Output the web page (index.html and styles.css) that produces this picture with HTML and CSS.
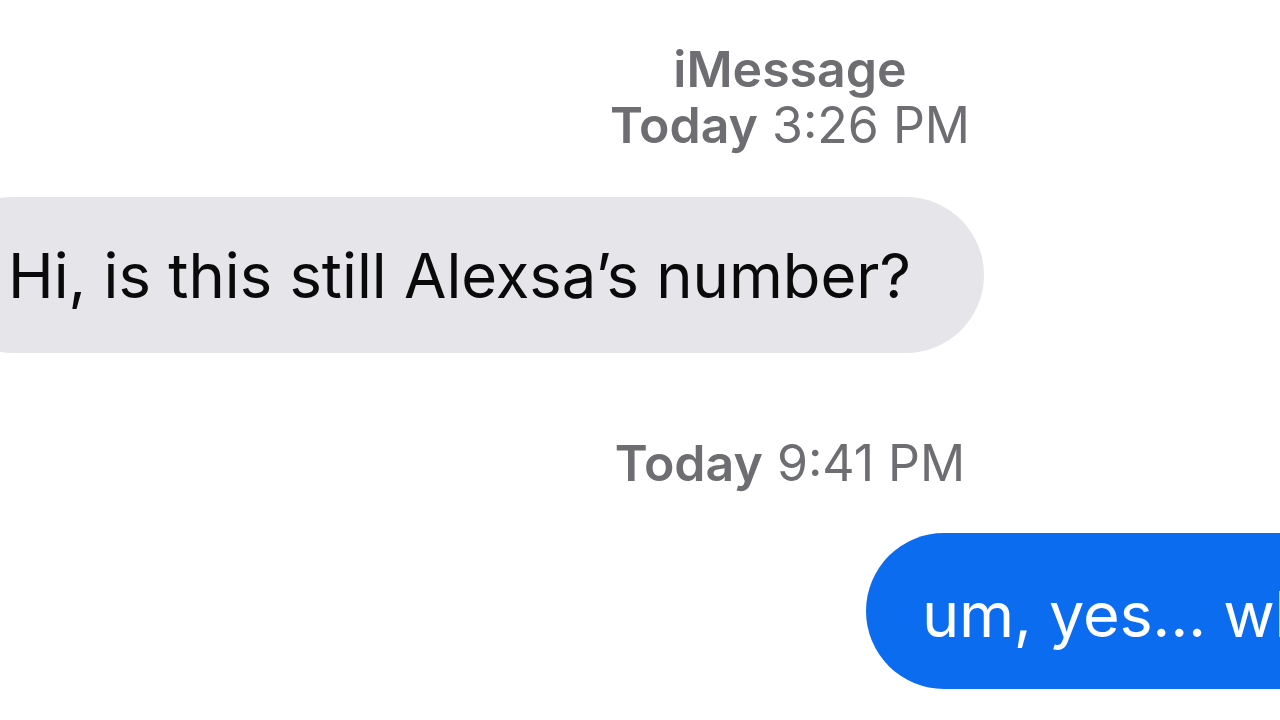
FILE: index.html
```html
<!DOCTYPE html>
<html lang="en">
<head>
    <meta charset="UTF-8">
    <meta name="viewport" content="width=device-width, initial-scale=1.0">
    <title>Messages</title>
    <link rel="stylesheet" href="styles.css">
</head>
<body>
    <div class="thread">
        <!-- first stamp -->
        <div class="stamp stamp-first">
            <div class="service">iMessage</div>
            <div><span class="day">Today</span> 3:26 PM</div>
        </div>

        <div class="bubble incoming">Hi, is this still Alexsa’s number?</div>

        <!-- second stamp -->
        <div class="stamp stamp-second">
            <div><span class="day">Today</span> 9:41 PM</div>
        </div>

        <div class="bubble outgoing">um, yes... who is this?</div>
    </div>
</body>
</html>
```

FILE: styles.css
```css
html, body {
    margin: 0;
    padding: 0;
    background: #ffffff;
}

body {
    width: 1280px;
    height: 720px;
    overflow: hidden;
    font-family: 'Inter', 'Liberation Sans', sans-serif;
}

.thread {
    display: flex;
    flex-direction: column;
    padding-top: 41px;
}

.stamp {
    padding-left: 300px;
    text-align: center;
    font-size: 50px;
    line-height: 56px;
    color: #6d6d72;
    font-weight: 400;
}

.stamp .service,
.stamp .day {
    font-weight: 600;
}

.stamp-second {
    margin-top: 82px;
}

.bubble {
    display: flex;
    align-items: center;
    box-sizing: border-box;
    height: 156px;
    border-radius: 78px;
    white-space: nowrap;
    width: max-content;
}

.incoming {
    margin-top: 44px;
    margin-left: -65px;
    padding: 0 73px;
    background: #e5e5ea;
    color: #0a0a0a;
    font-size: 61.5px;
}

.outgoing {
    margin-top: 42px;
    margin-left: 866px;
    padding: 6px 56px 0;
    background: #0b6cf0;
    color: #ffffff;
    font-size: 63px;
    letter-spacing: -0.3px;
}
```
